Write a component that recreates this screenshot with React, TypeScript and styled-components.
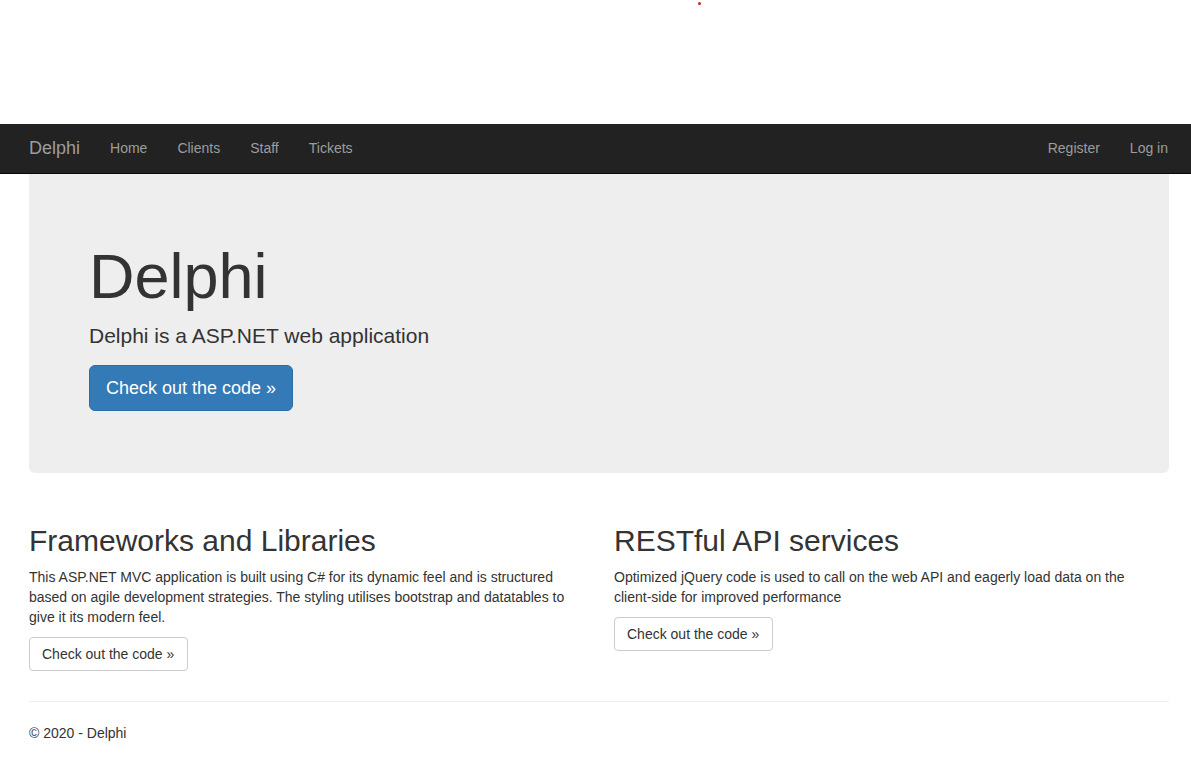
import React from "react";
import styled, { createGlobalStyle } from "styled-components";

const Global = createGlobalStyle`
  html, body { margin: 0; padding: 0; background: #fff; }
  body {
    font-family: "Liberation Sans", Arial, Helvetica, sans-serif;
    font-size: 14px;
    line-height: 1.42857143;
    color: #333;
  }
  * { box-sizing: border-box; }
`;

const Page = styled.div`
  position: relative;
  width: 1191px;
  min-height: 771px;
`;

const TopSpace = styled.div`
  height: 124px;
`;

const Dot = styled.span`
  position: absolute;
  left: 698px;
  top: 2px;
  width: 3px;
  height: 3px;
  border-radius: 50%;
  background: #d0201c;
`;

const Navbar = styled.nav`
  height: 50px;
  background: #222;
  border-bottom: 1px solid #080808;
`;

const NavInner = styled.div`
  width: 1140px;
  margin-left: 29px;
  height: 49px;
  display: flex;
  align-items: center;
  justify-content: space-between;
`;

const NavGroup = styled.div<{ $right?: boolean }>`
  display: flex;
  align-items: center;
  margin-right: ${(p) => (p.$right ? "-14px" : "0")};
`;

const Brand = styled.a`
  font-size: 18px;
  line-height: 20px;
  color: #9d9d9d;
  padding: 14px 15px 15px 0;
  text-decoration: none;
`;

const NavLink = styled.a`
  font-size: 14px;
  line-height: 20px;
  color: #9d9d9d;
  padding: 14px 15px 15px;
  text-decoration: none;
`;

const Container = styled.div`
  width: 1140px;
  margin-left: 29px;
`;

const Jumbotron = styled.div`
  background: #eee;
  border-radius: 0 0 6px 6px;
  padding: 48px 60px 47px;
  margin-bottom: 30px;
`;

const JumboTitle = styled.h1`
  font-size: 63px;
  line-height: 1.1;
  font-weight: 500;
  margin: 20px 0 10px;
  color: #333;
`;

const Lead = styled.p`
  font-size: 21px;
  line-height: 30px;
  font-weight: 200;
  margin: 0 0 14px;
`;

const BtnPrimary = styled.a`
  display: inline-block;
  font-size: 18px;
  line-height: 24px;
  padding: 10px 16px;
  color: #fff;
  background: #337ab7;
  border: 1px solid #2e6da4;
  border-radius: 6px;
  text-decoration: none;
`;

const BtnLine = styled.p<{ $mb?: number }>`
  margin: 0 0 ${(p) => p.$mb ?? 10}px;
`;

const Row = styled.div`
  display: grid;
  grid-template-columns: 1fr 1fr;
  column-gap: 30px;
`;

const Col = styled.div``;

const H2 = styled.h2`
  font-size: 30px;
  line-height: 33px;
  font-weight: 500;
  margin: 21px 0 10px;
`;

const Para = styled.p`
  margin: 0 0 10px;
  font-size: 14px;
  line-height: 20px;
`;

const NoWrap = styled.span`
  white-space: nowrap;
`;

const BtnDefault = styled.a`
  display: inline-block;
  font-size: 14px;
  line-height: 20px;
  padding: 6px 13px 6px 12px;
  color: #333;
  background: #fff;
  border: 1px solid #ccc;
  border-radius: 4px;
  text-decoration: none;
`;

const Hr = styled.hr`
  margin: 20px 0 21px;
  border: 0;
  border-top: 1px solid #eee;
`;

const Footer = styled.footer`
  p {
    margin: 0 0 10px;
  }
`;

export default function App() {
  return (
    <Page>
      <Global />
      <Dot />
      <TopSpace />
      <Navbar>
        <NavInner>
          <NavGroup>
            <Brand>Delphi</Brand>
            <NavLink>Home</NavLink>
            <NavLink>Clients</NavLink>
            <NavLink>Staff</NavLink>
            <NavLink>Tickets</NavLink>
          </NavGroup>
          <NavGroup $right>
            <NavLink>Register</NavLink>
            <NavLink>Log in</NavLink>
          </NavGroup>
        </NavInner>
      </Navbar>
      <Container>
        <Jumbotron>
          <JumboTitle>Delphi</JumboTitle>
          <Lead>Delphi is a ASP.NET web application</Lead>
          <BtnLine $mb={15}>
            <BtnPrimary>Check out the code &raquo;</BtnPrimary>
          </BtnLine>
        </Jumbotron>
        <Row>
          <Col>
            <H2>Frameworks and Libraries</H2>
            <Para>
              This ASP.NET MVC application is built using C# for its dynamic feel and is structured
              based on agile development strategies. The styling utilises bootstrap and datatables to
              give it its modern feel.
            </Para>
            <BtnLine>
              <BtnDefault>Check out the code &raquo;</BtnDefault>
            </BtnLine>
          </Col>
          <Col>
            <H2>RESTful API services</H2>
            <Para>
              Optimized jQuery code is used to call on the web API and eagerly load data on the{" "}
              <NoWrap>client-side</NoWrap> for improved performance
            </Para>
            <BtnLine>
              <BtnDefault>Check out the code &raquo;</BtnDefault>
            </BtnLine>
          </Col>
        </Row>
        <Hr />
        <Footer>
          <p>&copy; 2020 - Delphi</p>
        </Footer>
      </Container>
    </Page>
  );
}
